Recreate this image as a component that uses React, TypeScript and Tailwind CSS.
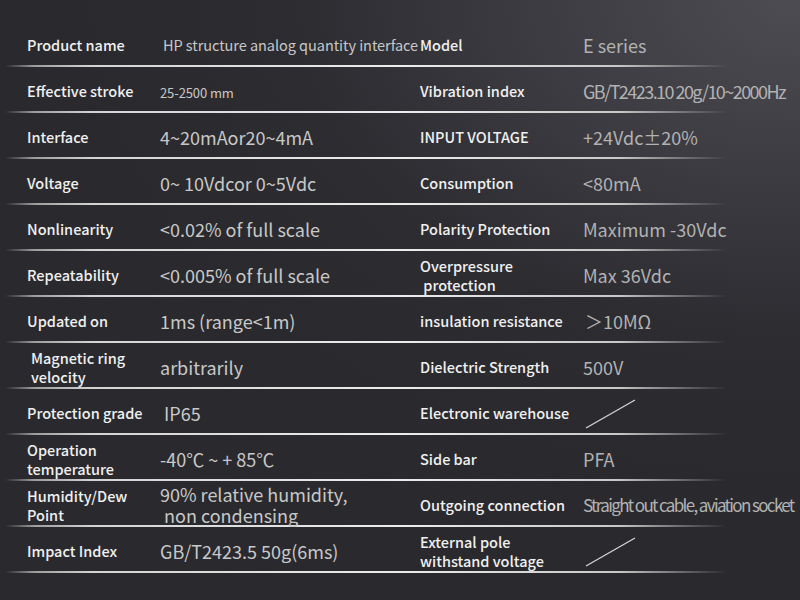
import React from 'react';

type Cell = { text: React.ReactNode; cls?: string };
type Row = { l: Cell; lv: Cell; r: Cell; rv: Cell };

function Slash() {
  return (
    <svg width="54" height="32" viewBox="0 0 54 32" className="mt-[2px]">
      <line x1="3" y1="30" x2="52" y2="2" stroke="#d6d6d6" strokeWidth="1.3" />
    </svg>
  );
}

const rows: Row[] = [
  {
    l: { text: 'Product name' },
    lv: { text: 'HP structure analog quantity interface', cls: 'text-[14.5px] tracking-[-0.05px] pl-[3px]' },
    r: { text: 'Model' },
    rv: { text: 'E series' },
  },
  {
    l: { text: 'Effective stroke' },
    lv: { text: '25-2500 mm', cls: 'text-[13px] tracking-[-0.1px] pt-[4px]' },
    r: { text: 'Vibration index' },
    rv: { text: 'GB/T2423.10 20g/10~2000Hz', cls: 'text-[18px] tracking-[-1.55px]' },
  },
  {
    l: { text: 'Interface' },
    lv: { text: '4~20mAor20~4mA' },
    r: { text: 'INPUT VOLTAGE' },
    rv: { text: '+24Vdc±20%' },
  },
  {
    l: { text: 'Voltage' },
    lv: { text: '0~ 10Vdcor 0~5Vdc' },
    r: { text: 'Consumption' },
    rv: { text: '<80mA' },
  },
  {
    l: { text: 'Nonlinearity' },
    lv: { text: '<0.02% of full scale' },
    r: { text: 'Polarity Protection' },
    rv: { text: 'Maximum -30Vdc' },
  },
  {
    l: { text: 'Repeatability' },
    lv: { text: '<0.005% of full scale' },
    r: { text: <>Overpressure<br />&nbsp;protection</> },
    rv: { text: 'Max 36Vdc' },
  },
  {
    l: { text: 'Updated on' },
    lv: { text: '1ms (range<1m)' },
    r: { text: 'insulation resistance' },
    rv: { text: '＞10MΩ', cls: 'text-[18px] pl-[2px]' },
  },
  {
    l: { text: <>Magnetic ring<br />velocity</>, cls: 'pl-[4px]' },
    lv: { text: 'arbitrarily' },
    r: { text: 'Dielectric Strength' },
    rv: { text: '500V' },
  },
  {
    l: { text: 'Protection grade' },
    lv: { text: 'IP65', cls: 'text-[18px] pl-[4px]' },
    r: { text: 'Electronic warehouse' },
    rv: { text: <Slash /> },
  },
  {
    l: { text: <>Operation<br />temperature</> },
    lv: { text: '-40℃ ~ + 85℃' },
    r: { text: 'Side bar' },
    rv: { text: 'PFA' },
  },
  {
    l: { text: <>Humidity/Dew<br />Point</> },
    lv: { text: <>90% relative humidity,<br />&nbsp;non condensing</>, cls: 'text-[18px] leading-[21px]' },
    r: { text: 'Outgoing connection' },
    rv: { text: 'Straight out cable, aviation socket', cls: 'text-[17px] tracking-[-1.65px]' },
  },
  {
    l: { text: 'Impact Index' },
    lv: { text: 'GB/T2423.5 50g(6ms)' },
    r: { text: <>External pole<br />withstand voltage</> },
    rv: { text: <Slash /> },
  },
];

export default function App() {
  return (
    <div
      className="w-[800px] h-[600px] overflow-hidden bg-[radial-gradient(ellipse_90%_80%_at_100%_0%,#4c4c52_0%,#3a3a40_40%,#2c2c31_70%,#2a2a2e_100%)] pt-[21px]"
      style={{ fontFamily: '"Noto Sans CJK SC", "Noto Sans", sans-serif' }}
    >
      {rows.map((row, i) => (
        <div key={i}>
          <div className="h-[44px] flex items-center pl-[27px] pt-[3px]">
            <div className={`w-[133px] shrink-0 text-[14.5px] font-medium text-[#f0f0f0] leading-[19px] whitespace-nowrap ${row.l.cls ?? ''}`}>
              {row.l.text}
            </div>
            <div className={`w-[260px] shrink-0 text-[#c8c8c8] leading-[20px] whitespace-nowrap ${row.lv.cls ?? 'text-[18px]'}`}>
              {row.lv.text}
            </div>
            <div className="w-[163px] shrink-0 text-[14.5px] font-medium text-[#f0f0f0] leading-[19px] whitespace-nowrap">
              {row.r.text}
            </div>
            <div className={`flex-1 min-w-0 text-[#b2b2b2] leading-[20px] whitespace-nowrap ${row.rv.cls ?? 'text-[18px]'}`}>
              {row.rv.text}
            </div>
          </div>
          <div className="ml-[5px] w-[722px] h-[2px] bg-[linear-gradient(to_right,rgba(160,160,160,0)_0%,#9c9c9c_4%,#d4d4d4_12%,#ececec_55%,#c8c8c8_85%,rgba(160,160,160,0)_100%)]" />
        </div>
      ))}
    </div>
  );
}
